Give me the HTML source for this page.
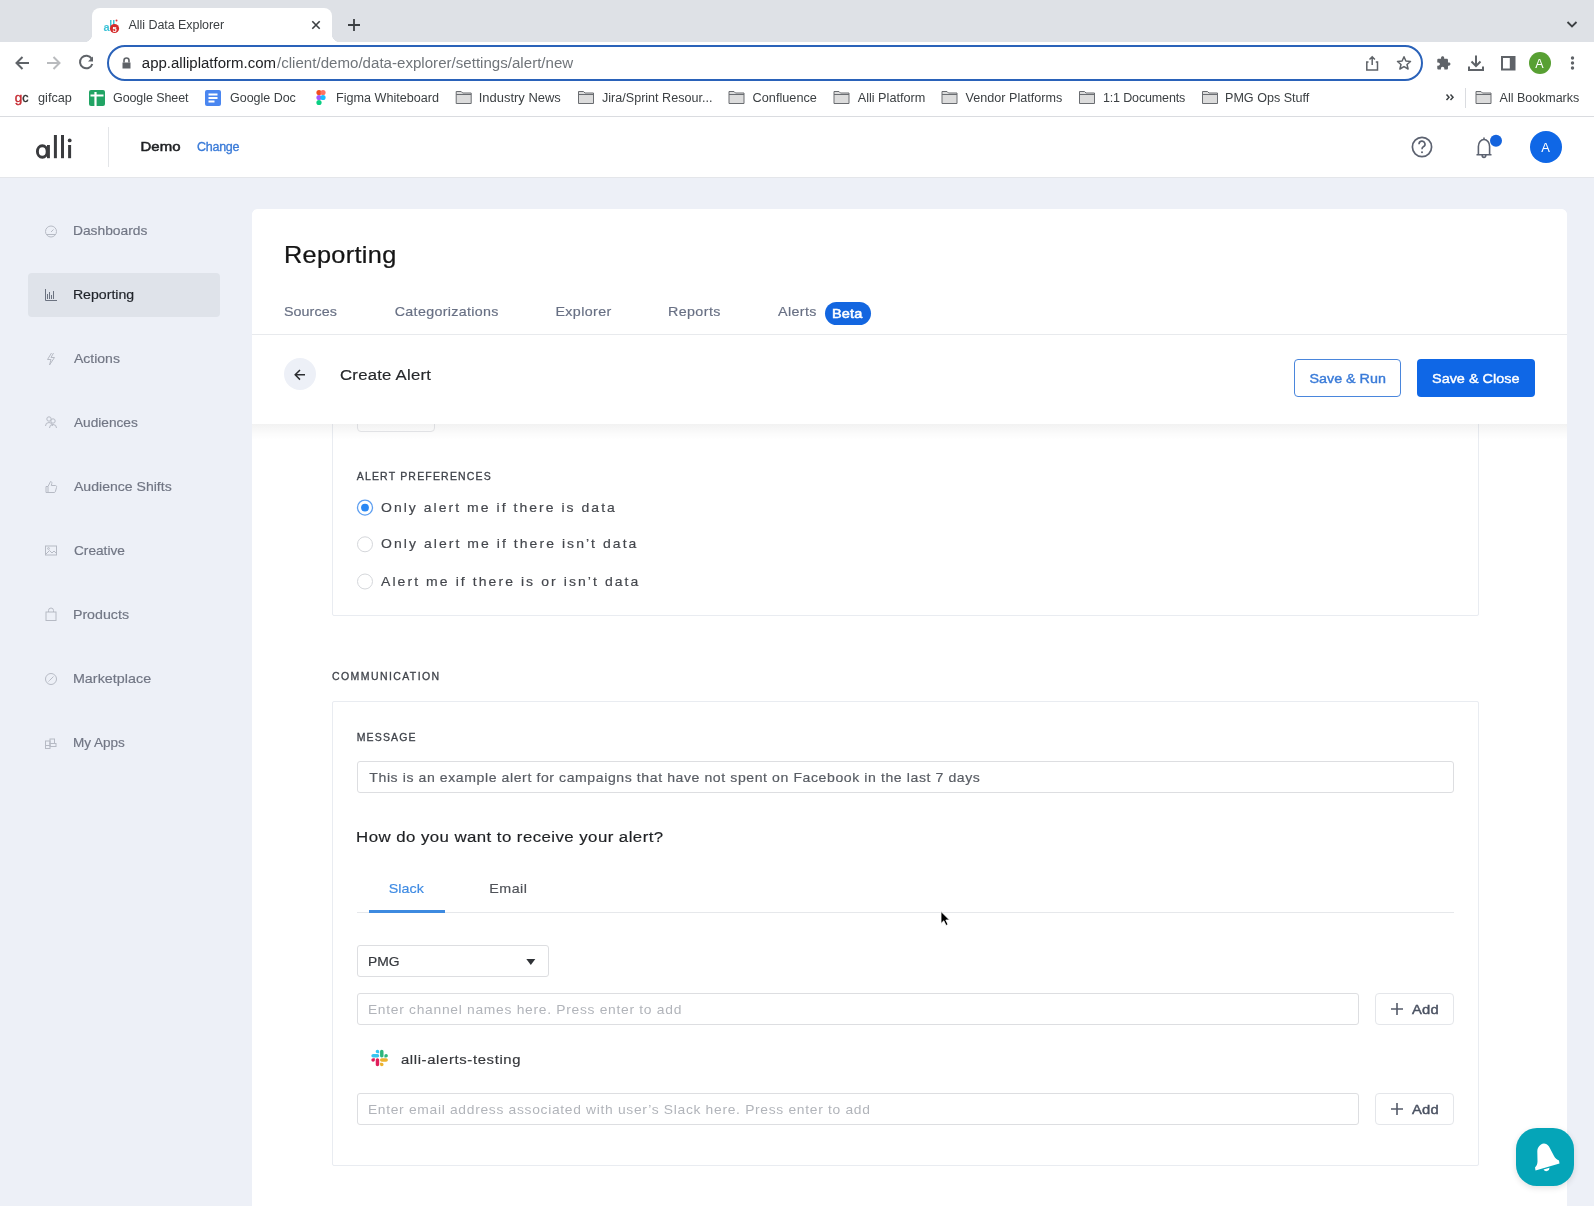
<!DOCTYPE html>
<html><head><meta charset="utf-8">
<style>
*{box-sizing:border-box;margin:0;padding:0}
html,body{width:1594px;height:1206px;overflow:hidden;background:#fff;font-family:"Liberation Sans",sans-serif;}
.b{position:absolute}
#ov{position:absolute;left:0;top:0;font-family:"Liberation Sans",sans-serif;will-change:transform}
</style></head><body>
<!-- chrome -->
<div class="b" style="left:0;top:0;width:1594px;height:42px;background:#dee1e6"></div>
<div class="b" style="left:92px;top:8px;width:240px;height:34px;background:#fff;border-radius:8px 8px 0 0"></div>
<div class="b" style="left:84px;top:34px;width:8px;height:8px;background:radial-gradient(circle at 0 0,#dee1e6 8px,#fff 8.5px)"></div>
<div class="b" style="left:332px;top:34px;width:8px;height:8px;background:radial-gradient(circle at 8px 0,#dee1e6 8px,#fff 8.5px)"></div>
<div class="b" style="left:107px;top:45px;width:1316px;height:36px;border:2px solid #2a62b9;border-radius:18px"></div>
<div class="b" style="left:0;top:116px;width:1594px;height:1px;background:#dadce0"></div>
<div class="b" style="left:1465px;top:88px;width:1px;height:20px;background:#dadce0"></div>
<!-- app header -->
<div class="b" style="left:108px;top:127px;width:1px;height:40px;background:#e3e5e8"></div>
<div class="b" style="left:0;top:177px;width:1594px;height:1px;background:#e4e6ea"></div>
<div class="b" style="left:0;top:178px;width:1594px;height:1028px;background:#edf0f7"></div>
<div class="b" style="left:28px;top:273px;width:192px;height:44px;background:#dfe3ea;border-radius:4px"></div>
<!-- card -->
<div class="b" style="left:252px;top:209px;width:1315px;height:1000px;background:#fff;border-radius:6px 6px 0 0"></div>
<!-- content boxes (under sticky header) -->
<div class="b" style="left:357px;top:395px;width:78px;height:37px;border:1px solid #e6e7ea;border-radius:4px"></div>
<div class="b" style="left:332px;top:380px;width:1147px;height:236px;border:1px solid #e9ecf1;border-radius:2px"></div>
<div class="b" style="left:332px;top:701px;width:1147px;height:465px;border:1px solid #e9ecf1;border-radius:2px"></div>
<div class="b" style="left:357px;top:761px;width:1097px;height:32px;border:1px solid #dddee1;border-radius:3px"></div>
<div class="b" style="left:357px;top:912px;width:1097px;height:1px;background:#e6e8eb"></div>
<div class="b" style="left:369px;top:910px;width:76px;height:3px;background:#3d8ae0"></div>
<div class="b" style="left:357px;top:945px;width:192px;height:32px;border:1px solid #dddee1;border-radius:3px"></div>
<div class="b" style="left:357px;top:993px;width:1002px;height:32px;border:1px solid #dddee1;border-radius:3px"></div>
<div class="b" style="left:1375px;top:993px;width:79px;height:32px;border:1px solid #e4e6ea;border-radius:4px"></div>
<div class="b" style="left:357px;top:1093px;width:1002px;height:32px;border:1px solid #dddee1;border-radius:3px"></div>
<div class="b" style="left:1375px;top:1093px;width:79px;height:32px;border:1px solid #e4e6ea;border-radius:4px"></div>
<!-- sticky header -->
<div class="b" style="left:252px;top:424px;width:1315px;height:16px;background:linear-gradient(rgba(0,0,0,.05),rgba(0,0,0,.015) 60%,rgba(0,0,0,0))"></div>
<div class="b" style="left:252px;top:209px;width:1315px;height:215px;background:#fff;border-radius:6px 6px 0 0"></div>
<div class="b" style="left:252px;top:334px;width:1315px;height:1px;background:#e8eaed"></div>
<div class="b" style="left:825px;top:302px;width:46px;height:23px;background:#1366e0;border-radius:12px"></div>
<div class="b" style="left:284px;top:358px;width:32px;height:32px;background:#edf0f7;border-radius:50%"></div>
<div class="b" style="left:1294px;top:359px;width:107px;height:38px;border:1px solid #4a86dc;border-radius:4px"></div>
<div class="b" style="left:1417px;top:359px;width:118px;height:38px;background:#0f67e6;border-radius:4px"></div>

<svg id="ov" width="1594" height="1206" viewBox="0 0 1594 1206">
<!-- favicon -->
<g>
<text x="103.5" y="31" font-size="11" font-weight="700" fill="#3cc3d8" letter-spacing="-0.8">a</text>
<rect x="110" y="20" width="1.5" height="7" fill="#3cc3d8"/><rect x="113" y="20" width="1.5" height="7" fill="#3cc3d8"/>
<circle cx="116.5" cy="20.5" r="1" fill="#e23a3a"/>
<circle cx="114.5" cy="28.5" r="4.6" fill="#d52b2b"/>
<text x="112.4" y="31.5" font-size="7.5" font-weight="700" fill="#fff">5</text>
</g>
<path d="M312.3 21.3L319.7 28.7M319.7 21.3L312.3 28.7" stroke="#3c4043" stroke-width="1.6" fill="none"/>
<path d="M354 19V31M348 25H360" stroke="#3c4043" stroke-width="1.8" fill="none"/>
<path d="M1567.5 22L1572 26.5L1576.5 22" stroke="#3c4043" stroke-width="1.8" fill="none"/>
<!-- nav -->
<path d="M29 63H16.5M22.5 57L16.5 63L22.5 69" stroke="#5f6368" stroke-width="2" fill="none"/>
<path d="M47 63H59.5M53.5 57L59.5 63L53.5 69" stroke="#b9bbbe" stroke-width="2" fill="none"/>
<path d="M91.6 58.6A6.3 6.3 0 1 0 92.3 64" stroke="#5f6368" stroke-width="2" fill="none"/>
<path d="M93 56.5V61.5H88Z" fill="#5f6368"/>
<path d="M122.5 62.5h8v6h-8z" fill="#5f6368"/>
<path d="M124 62.5V60.5A2.5 2.5 0 0 1 129 60.5V62.5" stroke="#5f6368" stroke-width="1.6" fill="none"/>
<!-- omnibox right icons -->
<path d="M1368.5 62H1366.8V70H1377.5V62H1375.8M1372.2 65V57M1369.5 59.5L1372.2 56.8L1374.9 59.5" stroke="#5f6368" stroke-width="1.5" fill="none"/>
<path d="M1404 56.8L1405.9 61L1410.5 61.5L1407 64.5L1408.1 69L1404 66.6L1399.9 69L1401 64.5L1397.5 61.5L1402.1 61Z" stroke="#5f6368" stroke-width="1.5" fill="none" stroke-linejoin="round"/>
<!-- toolbar icons -->
<path transform="translate(1436 55.6) scale(0.63)" d="M20.5 11H19V7c0-1.1-.9-2-2-2h-4V3.5C13 2.12 11.880 1 10.5 1S8 2.12 8 3.5V5H4c-1.1 0-1.99.9-1.99 2v3.8H3.5c1.49 0 2.7 1.21 2.7 2.7s-1.21 2.7-2.7 2.7H2V20c0 1.1.9 2 2 2h3.8v-1.5c0-1.490 1.21-2.7 2.7-2.7 1.49 0 2.7 1.21 2.7 2.7V22H17c1.1 0 2-.9 2-2v-4h1.5c1.38 0 2.5-1.12 2.5-2.5S21.88 11 20.5 11z" fill="#5f6368"/>
<path d="M1476 55.5V65.5M1471.5 61.5L1476 66L1480.5 61.5M1469 66.5V70H1483V66.5" stroke="#5f6368" stroke-width="2" fill="none"/>
<rect x="1502" y="57" width="12.5" height="12.5" stroke="#5f6368" stroke-width="2" fill="none"/>
<rect x="1509.8" y="57" width="4.7" height="12.5" fill="#5f6368"/>
<circle cx="1540" cy="63" r="11" fill="#58a033"/>
<text x="1535.3" y="67.5" font-size="12.5" fill="#fff">A</text>
<circle cx="1572.5" cy="58" r="1.7" fill="#5f6368"/><circle cx="1572.5" cy="63" r="1.7" fill="#5f6368"/><circle cx="1572.5" cy="68" r="1.7" fill="#5f6368"/>
<!-- bookmarks icons -->
<text x="14.8" y="102" font-size="13.5" fill="#c5282f" stroke="#c5282f" stroke-width="0.4">g</text>
<text x="22.3" y="101.5" font-size="12.5" fill="#333" stroke="#333" stroke-width="0.4">c</text>
<rect x="89" y="90" width="16" height="16" rx="2" fill="#21a464"/>
<path d="M90.5 95.5H103.5M95.5 92V106" stroke="#fff" stroke-width="2.2" fill="none"/>
<rect x="205" y="90" width="16" height="16" rx="2" fill="#4a86f0"/>
<path d="M208.5 94.5H217.5M208.5 98H217.5M208.5 101.5H214.5" stroke="#fff" stroke-width="1.8" fill="none"/>
<g>
<circle cx="319" cy="92.5" r="2.6" fill="#f24e1e"/><circle cx="323" cy="92.5" r="2.6" fill="#ff7262"/>
<circle cx="319" cy="97.5" r="2.6" fill="#a259ff"/><circle cx="323" cy="97.5" r="2.6" fill="#1abcfe"/>
<circle cx="319" cy="102.5" r="2.6" fill="#0acf83"/>
</g>
<defs><g id="fold">
<path d="M0.5 1.5H5.5L7 3H15.5V13.5H0.5Z" fill="#dcdcdc" stroke="#6a6d71" stroke-width="1"/>
<path d="M0.5 4.5H15.5" stroke="#6a6d71" stroke-width="1"/>
</g></defs>
<use href="#fold" x="455.7" y="90"/><use href="#fold" x="578" y="90"/><use href="#fold" x="728.5" y="90"/>
<use href="#fold" x="833.5" y="90"/><use href="#fold" x="941.5" y="90"/><use href="#fold" x="1079" y="90"/>
<use href="#fold" x="1202" y="90"/><use href="#fold" x="1475.5" y="90"/>
<path d="M1446.5 94.5L1449 97.3L1446.5 100M1450.5 94.5L1453 97.3L1450.5 100" stroke="#3c4043" stroke-width="1.5" fill="none"/>
<!-- logo -->
<ellipse cx="42.3" cy="151.5" rx="4.9" ry="5.8" stroke="#3a3b3e" stroke-width="2.9" fill="none"/>
<rect x="47" y="145" width="2.9" height="13.2" fill="#3a3b3e"/>
<rect x="53.9" y="135" width="3" height="23.2" fill="#3a3b3e"/>
<rect x="61" y="135" width="3" height="23.2" fill="#3a3b3e"/>
<rect x="68.1" y="145" width="3" height="13.2" fill="#3a3b3e"/>
<circle cx="69.7" cy="140.4" r="1.9" fill="#3a3b3e"/>
<!-- header icons -->
<circle cx="1422" cy="147" r="9.6" stroke="#5c6270" stroke-width="1.7" fill="none"/>
<path d="M1419 144.2A3 3 0 1 1 1423.3 146.8C1422.4 147.3 1422 147.9 1422 149.2" stroke="#5c6270" stroke-width="1.6" fill="none"/>
<circle cx="1422" cy="152.2" r="1" fill="#5c6270"/>
<path d="M1476.5 154.7H1491.5M1478.4 154.7V146.5A5.6 7 0 0 1 1489.6 146.5V154.7M1484 139.6V137.6M1482.2 155.6A1.8 1.8 0 0 0 1485.8 155.6" stroke="#5c6270" stroke-width="1.6" fill="none"/>
<circle cx="1496" cy="140.8" r="6" fill="#1463dd"/>
<circle cx="1546" cy="147" r="16" fill="#0f67e6"/>
<text x="1541.3" y="152" font-size="13" fill="#fff">A</text>
<!-- sidebar icons -->
<g stroke="#b6bac4" stroke-width="1" fill="none">
<circle cx="51" cy="231.5" r="5.5"/><path d="M51 232L53.5 229.5M46.5 234.5H55.5"/>
<path d="M45.5 289V300.5H57M47.5 299V294M49.5 299V292M51.5 299V295M53.5 299V291" stroke="#6b7280"/>
<path d="M51.5 353L47.5 359.5H51L49.5 365L54.5 357.5H51L53.5 353" />
<circle cx="49" cy="419" r="2.2"/><path d="M45.5 426A3.5 3.5 0 0 1 52.5 426"/><circle cx="53" cy="421" r="2.2"/><path d="M49.5 428A3.5 3.5 0 0 1 56.5 428"/>
<path d="M46 486.5H48V492.5H46ZM48 486.5L50.5 481.5C51.8 481.5 52 482.5 51.8 483.5L51.3 485.5H55.5C56.5 485.5 56.8 486.5 56.5 487.5L55.3 491.8C55 492.4 54.6 492.5 54 492.5H48"/>
<rect x="45.5" y="546" width="11" height="9"/><path d="M46 554L49.5 550.5L52 553L54 551L56.5 553.5"/><circle cx="48.5" cy="548.5" r="0.9"/>
<rect x="46" y="612" width="10" height="8.5"/><path d="M48.5 612V610.5A2.5 2.5 0 0 1 53.5 610.5V612"/>
<circle cx="51" cy="679" r="5.5"/><path d="M53.5 676.5L49.5 680.5L48.5 681.5"/>
<rect x="45.5" y="741" width="4.5" height="4.5"/><rect x="50" y="739" width="4.5" height="4.5"/><rect x="45.5" y="745.5" width="4.5" height="3"/><rect x="50" y="743.5" width="6" height="3"/>
</g>
<!-- back arrow -->
<path d="M305 374.8H295.5M300 370L295.2 374.8L300 379.6" stroke="#2b2d30" stroke-width="1.5" fill="none"/>
<!-- radios -->
<circle cx="365" cy="507.6" r="7.5" stroke="#5e9ff0" stroke-width="1.3" fill="#fff"/>
<circle cx="365" cy="507.6" r="3.9" fill="#2a88f4"/>
<circle cx="365" cy="544.3" r="7.5" stroke="#d4d6da" stroke-width="1" fill="#fff"/>
<circle cx="365" cy="581.5" r="7.5" stroke="#d4d6da" stroke-width="1" fill="#fff"/>
<!-- caret -->
<path d="M526.3 959H535.3L530.8 965Z" fill="#2f3236"/>
<!-- plus -->
<path d="M1397 1003V1015M1391 1009H1403" stroke="#545b69" stroke-width="1.6" fill="none"/>
<path d="M1397 1103V1115M1391 1109H1403" stroke="#545b69" stroke-width="1.6" fill="none"/>
<!-- slack logo -->
<g transform="translate(371.3 1049.6) scale(0.131)">
<path d="M27.2 80c0 7.3-5.9 13.2-13.2 13.2C6.7 93.2.8 87.3.8 80c0-7.3 5.9-13.2 13.2-13.2h13.2V80zm6.6 0c0-7.3 5.9-13.2 13.2-13.2 7.3 0 13.2 5.9 13.2 13.2v33c0 7.3-5.9 13.2-13.2 13.2-7.3 0-13.2-5.900-13.2-13.2V80z" fill="#E01E5A"/>
<path d="M47 27c-7.3 0-13.2-5.9-13.2-13.2C33.8 6.5 39.7.6 47 .6c7.3 0 13.2 5.9 13.2 13.2V27H47zm0 6.7c7.3 0 13.2 5.9 13.2 13.2 0 7.3-5.9 13.2-13.2 13.2H13.9C6.6 60.1.7 54.2.7 46.9c0-7.3 5.9-13.2 13.2-13.2H47z" fill="#36C5F0"/>
<path d="M99.9 46.9c0-7.3 5.9-13.2 13.2-13.2 7.3 0 13.2 5.9 13.2 13.2 0 7.3-5.9 13.2-13.2 13.2H99.9V46.9zm-6.6 0c0 7.3-5.9 13.2-13.2 13.2-7.3 0-13.2-5.9-13.2-13.2V13.8C66.9 6.5 72.8.6 80.1.6c7.3 0 13.2 5.9 13.2 13.2v33.1z" fill="#2EB67D"/>
<path d="M80.1 99.8c7.3 0 13.2 5.9 13.2 13.2 0 7.3-5.9 13.2-13.2 13.2-7.3 0-13.2-5.9-13.2-13.2V99.8h13.2zm0-6.6c-7.3 0-13.2-5.9-13.2-13.2 0-7.3 5.9-13.2 13.2-13.2h33.1c7.3 0 13.2 5.9 13.2 13.2 0 7.3-5.9 13.2-13.2 13.2H80.1z" fill="#ECB22E"/>
</g>

<text x="128.6" y="28.8" font-size="12.5" fill="#3c4043" letter-spacing="-0.059">Alli Data Explorer</text>
<text transform="translate(141.8 67.7) scale(1.0349 1)" font-size="14.5" fill="#202124">app.alliplatform.com</text>
<text transform="translate(277.0 67.7) scale(1.042 1)" font-size="14.5" fill="#70757a">/client/demo/data-explorer/settings/alert/new</text>
<text transform="translate(38.0 102) scale(1.0178 1)" font-size="12.5" fill="#3c4043">gifcap</text>
<text x="113.0" y="102" font-size="12.5" fill="#3c4043" letter-spacing="-0.089">Google Sheet</text>
<text x="230.0" y="102" font-size="12.5" fill="#3c4043" letter-spacing="-0.018">Google Doc</text>
<text transform="translate(335.99 102) scale(1.0082 1)" font-size="12.5" fill="#3c4043">Figma Whiteboard</text>
<text transform="translate(478.76 102) scale(1.0367 1)" font-size="12.5" fill="#3c4043">Industry News</text>
<text transform="translate(602.0 102) scale(1.0065 1)" font-size="12.5" fill="#3c4043">Jira/Sprint Resour...</text>
<text transform="translate(752.6 102) scale(1.0176 1)" font-size="12.5" fill="#3c4043">Confluence</text>
<text transform="translate(857.7 102) scale(1.0156 1)" font-size="12.5" fill="#3c4043">Alli Platform</text>
<text transform="translate(965.6 102) scale(1.0081 1)" font-size="12.5" fill="#3c4043">Vendor Platforms</text>
<text x="1103.0" y="102" font-size="12.5" fill="#3c4043" letter-spacing="-0.152">1:1 Documents</text>
<text transform="translate(1224.99 102) scale(1.0078 1)" font-size="12.5" fill="#3c4043">PMG Ops Stuff</text>
<text x="1499.6" y="102" font-size="12.5" fill="#3c4043" letter-spacing="-0.019">All Bookmarks</text>
<text transform="translate(140.5 151) scale(1.1 1)" font-size="13.6" fill="#1f2124" letter-spacing="0.069" stroke="#1f2124" stroke-width="0.55">Demo</text>
<text x="197.0" y="151" font-size="12.5" fill="#3a7bd8" letter-spacing="-0.267" stroke="#3a7bd8" stroke-width="0.35">Change</text>
<text transform="translate(72.94 234.9) scale(1.0633 1)" font-size="13" fill="#717684" stroke="#717684" stroke-width="0.18">Dashboards</text>
<text transform="translate(72.91 298.9) scale(1.0882 1)" font-size="13" fill="#1f2329" stroke="#1f2329" stroke-width="0.18">Reporting</text>
<text transform="translate(74.0 362.9) scale(1.0781 1)" font-size="13" fill="#717684" stroke="#717684" stroke-width="0.18">Actions</text>
<text transform="translate(74.0 426.9) scale(1.0521 1)" font-size="13" fill="#717684" stroke="#717684" stroke-width="0.18">Audiences</text>
<text transform="translate(74.0 490.9) scale(1.0822 1)" font-size="13" fill="#717684" stroke="#717684" stroke-width="0.18">Audience Shifts</text>
<text transform="translate(74.0 554.9) scale(1.0524 1)" font-size="13" fill="#717684" stroke="#717684" stroke-width="0.18">Creative</text>
<text transform="translate(72.91 618.9) scale(1.0945 1)" font-size="13" fill="#717684" stroke="#717684" stroke-width="0.18">Products</text>
<text transform="translate(72.9 682.9) scale(1.1 1)" font-size="13" fill="#717684" letter-spacing="0.042" stroke="#717684" stroke-width="0.18">Marketplace</text>
<text transform="translate(72.96 746.9) scale(1.0425 1)" font-size="13" fill="#717684" stroke="#717684" stroke-width="0.18">My Apps</text>
<text transform="translate(283.9 262.9) scale(1.1 1)" font-size="23" fill="#151515" letter-spacing="0.315" stroke="#151515" stroke-width="0.25">Reporting</text>
<text transform="translate(284.0 315.8) scale(1.1 1)" font-size="13" fill="#687084" letter-spacing="0.059" stroke="#687084" stroke-width="0.18">Sources</text>
<text transform="translate(394.7 315.8) scale(1.1 1)" font-size="13" fill="#687084" letter-spacing="0.285" stroke="#687084" stroke-width="0.18">Categorizations</text>
<text transform="translate(555.4 315.8) scale(1.1 1)" font-size="13" fill="#687084" letter-spacing="0.339" stroke="#687084" stroke-width="0.18">Explorer</text>
<text transform="translate(667.9 315.8) scale(1.1 1)" font-size="13" fill="#687084" letter-spacing="0.376" stroke="#687084" stroke-width="0.18">Reports</text>
<text transform="translate(778.0 315.8) scale(1.1 1)" font-size="13" fill="#687084" letter-spacing="0.345" stroke="#687084" stroke-width="0.18">Alerts</text>
<text transform="translate(831.9 318) scale(1.1 1)" font-size="13.2" fill="#ffffff" letter-spacing="0.16" stroke="#ffffff" stroke-width="0.55">Beta</text>
<text transform="translate(340.0 379.8) scale(1.1 1)" font-size="15.2" fill="#26282b" letter-spacing="0.224" stroke="#26282b" stroke-width="0.18">Create Alert</text>
<text transform="translate(1309.5 382.8) scale(1.061 1)" font-size="13.5" fill="#3a7bd8" stroke="#3a7bd8" stroke-width="0.4">Save &amp; Run</text>
<text transform="translate(1432.0 382.8) scale(1.0703 1)" font-size="13.5" fill="#ffffff" stroke="#ffffff" stroke-width="0.4">Save &amp; Close</text>
<text x="356.7" y="479.8" font-size="10.5" fill="#3f434a" letter-spacing="1.185" stroke="#3f434a" stroke-width="0.3">ALERT PREFERENCES</text>
<text transform="translate(381.0 511.7) scale(1.06 1)" font-size="13.2" fill="#44474d" letter-spacing="1.919" stroke="#44474d" stroke-width="0.18">Only alert me if there is data</text>
<text transform="translate(381.0 548.4) scale(1.06 1)" font-size="13.2" fill="#44474d" letter-spacing="1.938" stroke="#44474d" stroke-width="0.18">Only alert me if there isn’t data</text>
<text transform="translate(381.0 585.5) scale(1.06 1)" font-size="13.2" fill="#44474d" letter-spacing="1.958" stroke="#44474d" stroke-width="0.18">Alert me if there is or isn’t data</text>
<text x="332.0" y="680" font-size="10.5" fill="#3f434a" letter-spacing="1.414" stroke="#3f434a" stroke-width="0.3">COMMUNICATION</text>
<text x="356.7" y="740.8" font-size="10.5" fill="#3f434a" letter-spacing="1.162" stroke="#3f434a" stroke-width="0.3">MESSAGE</text>
<text transform="translate(369.3 782.1) scale(1.1 1)" font-size="12.8" fill="#585c63" letter-spacing="0.534" stroke="#585c63" stroke-width="0.18">This is an example alert for campaigns that have not spent on Facebook in the last 7 days</text>
<text transform="translate(356.1 842.1) scale(1.1 1)" font-size="15.3" fill="#1f2124" letter-spacing="0.398" stroke="#1f2124" stroke-width="0.18">How do you want to receive your alert?</text>
<text transform="translate(388.7 893) scale(1.1 1)" font-size="13" fill="#3f8be3" letter-spacing="0.064" stroke="#3f8be3" stroke-width="0.18">Slack</text>
<text transform="translate(489.3 893) scale(1.1 1)" font-size="13" fill="#505359" letter-spacing="0.414" stroke="#505359" stroke-width="0.18">Email</text>
<text transform="translate(367.9 965.8) scale(1.1 1)" font-size="12.6" fill="#35383d" stroke="#35383d" stroke-width="0.18">PMG</text>
<text transform="translate(367.9 1013.8) scale(1.1 1)" font-size="12.6" fill="#b1b4ba" letter-spacing="0.637">Enter channel names here. Press enter to add</text>
<text transform="translate(400.9 1063.8) scale(1.1 1)" font-size="13.5" fill="#35373b" letter-spacing="0.583" stroke="#35373b" stroke-width="0.18">alli-alerts-testing</text>
<text transform="translate(367.9 1113.8) scale(1.1 1)" font-size="12.6" fill="#b1b4ba" letter-spacing="0.62">Enter email address associated with user’s Slack here. Press enter to add</text>
<text transform="translate(1412.0 1014) scale(1.1 1)" font-size="13.4" fill="#4b5262" letter-spacing="0.265" stroke="#4b5262" stroke-width="0.45">Add</text>
<text transform="translate(1412.0 1114) scale(1.1 1)" font-size="13.4" fill="#4b5262" letter-spacing="0.265" stroke="#4b5262" stroke-width="0.45">Add</text>
</svg>
<!-- chat bubble -->
<div class="b" style="left:1516px;top:1128px;width:58px;height:58px;background:#05a5b8;border-radius:21px;box-shadow:0 2px 6px rgba(0,0,0,.12)"></div>
<svg class="b" style="left:0;top:0" width="1594" height="1206"><path d="M1541 1144.5C1543.5 1142.5 1547 1143.5 1549 1146.5L1554 1156C1555 1158 1557 1159.5 1559 1160.5L1559.5 1163.5L1535.5 1170.5L1535 1167.5C1536.5 1166 1537.5 1164 1537.5 1161.5L1537.3 1151C1537.3 1148 1539 1146 1541 1144.5Z" fill="#fff"/>
<path d="M1543.5 1169.5A3.2 3.2 0 0 0 1549.5 1167.8Z" fill="#fff"/>
<path d="M941 911.5V923.5L943.8 920.8L946 925.5L948 924.5L945.8 920H949.5Z" fill="#000" stroke="#fff" stroke-width="0.8"/>
</svg>
</body></html>
